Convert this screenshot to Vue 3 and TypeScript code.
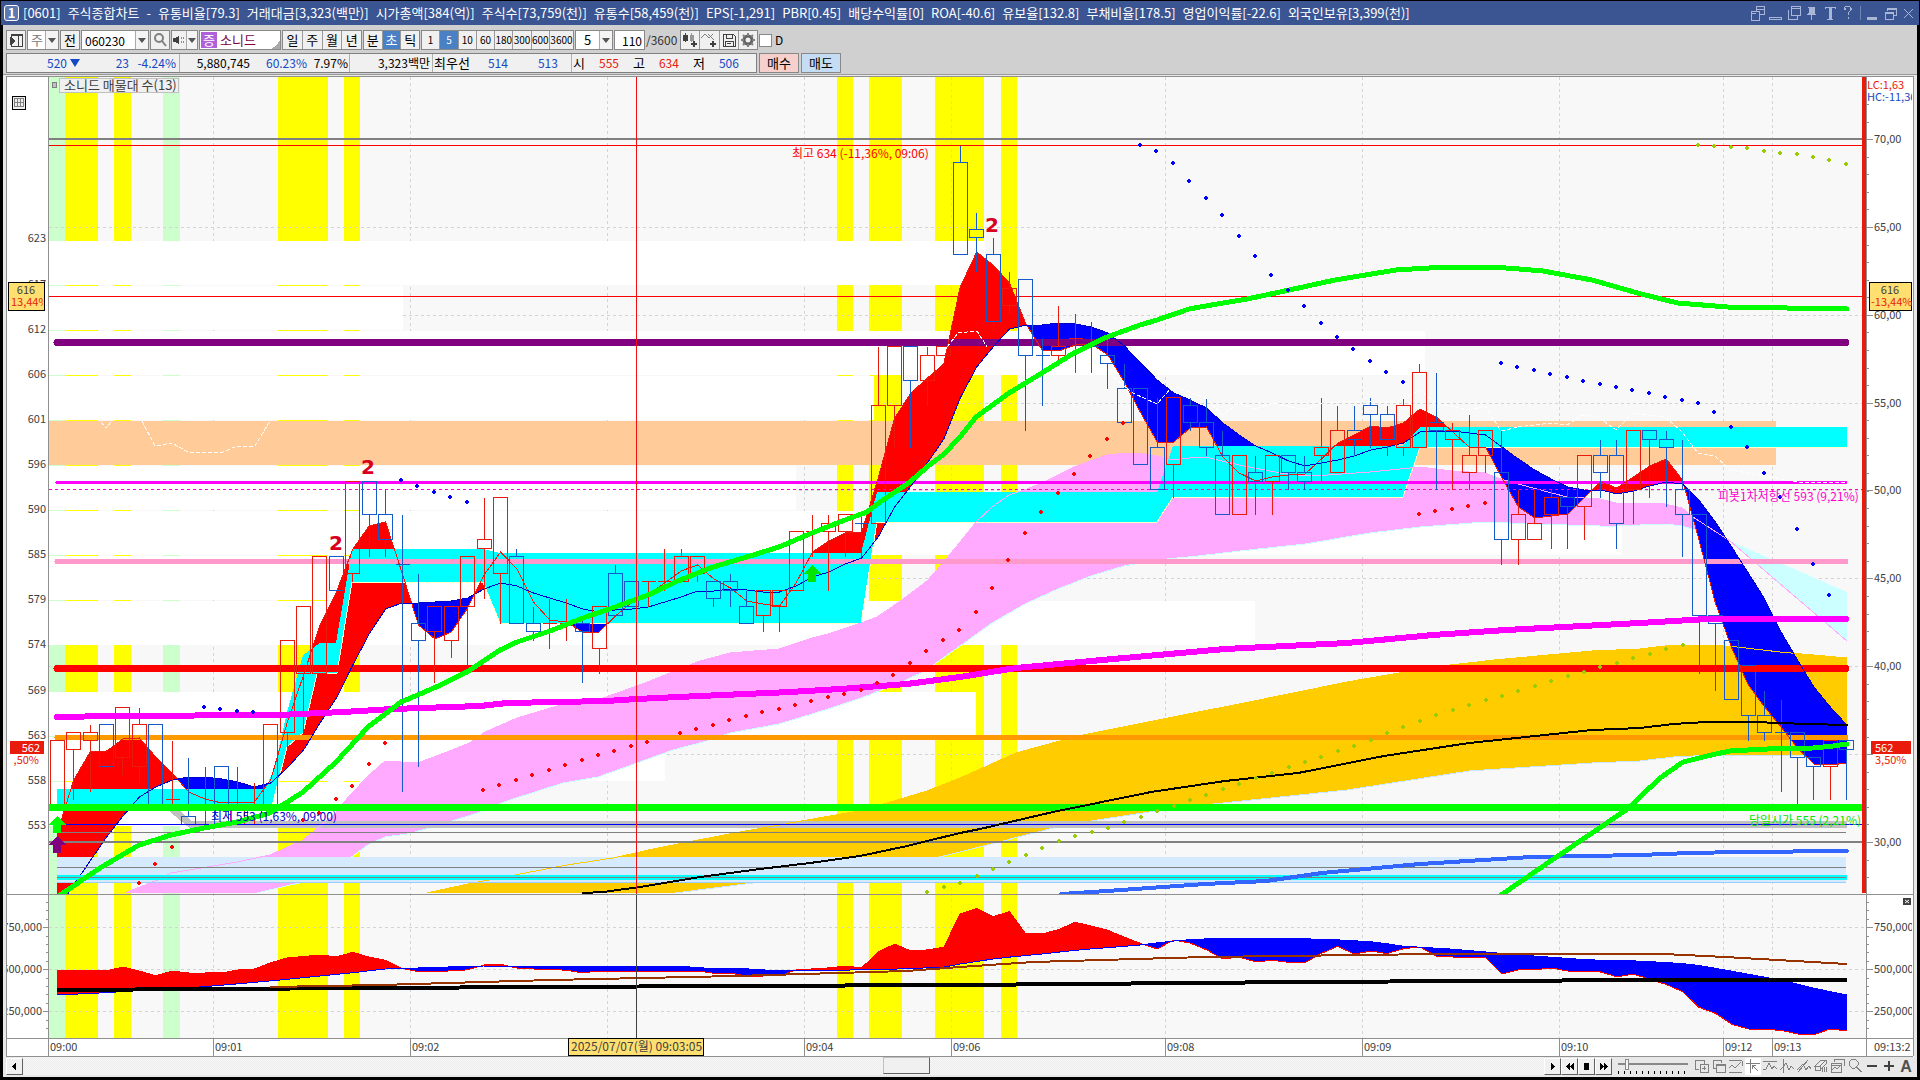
<script setup lang="ts">
type Point = [number, number]

const X0 = 57.3
const STEP = 16.417
const COUNT = 110
const xAt = (i: number): number => X0 + STEP * i
const yAt = (price: number): number => 824.3 - 8.383 * (price - 553)

// [colour, body top, body bottom, high, low]
const raw: [string, number, number, number, number][] = [
  ['r', 563, 555, 563, 555], ['r', 564, 562, 564, 556], ['r', 564, 563, 565, 557], ['b', 565, 560, 565, 560],
  ['r', 567, 561, 567, 559], ['r', 565, 560, 567, 558], ['b', 565, 555, 565, 555], ['r', 556, 556, 563, 555],
  ['b', 554, 553, 561, 553], ['b', 555, 555, 560, 553], ['b', 560, 553, 560, 553], ['r', 555, 553, 560, 553],
  ['r', 555, 554, 558, 553], ['r', 565, 555, 565, 555], ['r', 575, 564, 575, 562], ['r', 579, 571, 579, 564],
  ['r', 585, 571, 585, 571], ['b', 585, 581, 585, 581], ['r', 594, 583, 594, 582], ['b', 594, 590, 594, 585],
  ['b', 590, 587, 593, 585], ['b', 584, 584, 590, 557], ['b', 577, 575, 583, 560], ['r', 579, 576, 579, 570],
  ['r', 579, 575, 579, 573], ['r', 585, 579, 585, 572], ['r', 587, 586, 592, 580], ['r', 592, 583, 592, 577],
  ['b', 585, 577, 586, 577], ['b', 577, 576, 579, 575], ['r', 577, 577, 580, 574], ['r', 577, 577, 580, 575],
  ['b', 577, 576, 578, 570], ['r', 579, 574, 579, 571], ['b', 583, 578, 584, 578], ['b', 582, 579, 582, 579],
  ['r', 582, 582, 582, 579], ['r', 582, 582, 586, 581], ['r', 585, 582, 586, 582], ['r', 585, 583, 585, 582],
  ['b', 582, 580, 582, 579], ['b', 582, 581, 583, 579], ['b', 579, 577, 581, 577], ['r', 581, 578, 581, 576],
  ['r', 581, 579, 581, 576], ['r', 588, 581, 588, 581], ['r', 588, 588, 590, 585], ['r', 589, 588, 590, 581],
  ['r', 590, 588, 590, 585], ['b', 589, 589, 590, 585], ['r', 603, 589, 610, 589], ['r', 610, 603, 610, 598],
  ['b', 610, 606, 610, 598], ['r', 609, 606, 610, 603], ['r', 610, 609, 610, 609], ['b', 632, 621, 634, 621],
  ['b', 624, 623, 626, 619], ['b', 621, 613, 623, 612], ['r', 617, 615, 619, 614], ['b', 618, 609, 618, 600],
  ['b', 609, 609, 611, 603], ['r', 610, 609, 615, 608], ['r', 611, 611, 614, 607], ['b', 610, 610, 613, 607],
  ['b', 609, 608, 611, 605], ['b', 605, 601, 608, 601], ['b', 605, 596, 605, 596], ['b', 598, 593, 604, 593],
  ['r', 604, 596, 604, 592], ['b', 603, 601, 604, 600], ['b', 601, 598, 604, 597], ['b', 597, 590, 600, 590],
  ['r', 597, 590, 597, 590], ['b', 595, 594, 597, 590], ['r', 597, 594, 597, 590], ['b', 597, 595, 597, 593],
  ['b', 595, 594, 597, 593], ['r', 598, 597, 604, 594], ['r', 600, 595, 603, 595], ['b', 600, 599, 603, 597],
  ['b', 603, 602, 604, 598], ['b', 602, 599, 603, 597], ['r', 603, 598, 604, 597], ['r', 607, 598, 608, 598],
  ['b', 601, 600, 607, 593], ['r', 600, 599, 601, 593], ['r', 597, 595, 602, 593], ['r', 600, 597, 600, 595],
  ['b', 595, 587, 600, 584], ['r', 590, 587, 593, 584], ['r', 589, 587, 593, 587], ['r', 592, 590, 593, 586],
  ['b', 592, 591, 593, 586], ['r', 597, 591, 597, 587], ['b', 597, 595, 599, 592], ['b', 597, 589, 599, 586],
  ['r', 600, 593, 600, 589], ['b', 600, 599, 600, 592], ['b', 599, 598, 600, 591], ['b', 593, 590, 599, 585],
  ['b', 590, 578, 590, 571], ['b', 578, 577, 578, 569], ['b', 575, 568, 575, 568], ['b', 572, 566, 572, 563],
  ['b', 566, 564, 569, 563], ['b', 564, 564, 568, 557], ['b', 564, 561, 564, 555], ['b', 561, 560, 561, 556],
  ['r', 563, 560, 563, 556], ['b', 563, 562, 563, 556],
]
const candles = raw.map(([c, top, bottom, high, low], i) => {
  const x = Math.floor(xAt(i))
  const t = Math.round(yAt(top))
  const b = Math.round(yAt(bottom))
  const wick = `M${x} ${Math.round(yAt(high))}V${t}M${x} ${b}V${Math.round(yAt(low))}`
  const body = t === b ? `M${x - 7} ${t}H${x + 7}` : `M${x - 7} ${t}H${x + 7}V${b}H${x - 7}Z`
  return { d: wick + body, color: c === 'r' ? '#e81b0c' : '#145ac8' }
})

const fast = [
  833, 780, 752, 751, 739, 738, 757, 773, 792, 799, 803, 802, 802, 780, 723, 675, 625, 592, 549, 526, 522, 573,
  625, 639, 632, 608, 575, 552, 569, 602, 620, 622, 632, 632, 616, 602, 594, 583, 571, 565, 579, 588, 601, 604,
  606, 583, 552, 541, 533, 532, 478, 418, 393, 378, 364, 287, 252, 265, 283, 324, 350, 351, 345, 344, 355, 382,
  413, 442, 442, 428, 427, 457, 473, 481, 477, 475, 474, 459, 443, 435, 426, 428, 423, 409, 417, 432, 447, 447,
  478, 507, 518, 516, 514, 498, 482, 488, 477, 466, 459, 480, 540, 603, 648, 685, 707, 727, 748, 764, 765, 763,
]
const slow = [
  910, 885, 861, 837, 816, 797, 787, 780, 777, 777, 779, 782, 787, 783, 768, 750, 723, 698, 665, 634, 609, 603,
  603, 602, 601, 598, 589, 583, 586, 593, 598, 603, 609, 612, 610, 609, 607, 602, 597, 591, 591, 589, 590, 592,
  592, 586, 577, 572, 564, 558, 537, 507, 486, 463, 439, 398, 367, 347, 329, 325, 325, 323, 324, 327, 333, 346,
  363, 380, 393, 400, 408, 423, 435, 446, 453, 461, 466, 463, 460, 456, 450, 447, 443, 432, 431, 431, 433, 435,
  447, 459, 470, 479, 487, 490, 490, 494, 491, 486, 482, 484, 500, 522, 547, 573, 599, 632, 660, 687, 707, 725,
]

function line(points: Point[]): string {
  return 'M' + points.map(([x, y]) => `${x.toFixed(1)} ${y.toFixed(1)}`).join('L')
}
function area(top: Point[], bottom: Point[]): string {
  return line([...top, ...[...bottom].reverse()]) + 'Z'
}
function sample(points: Point[]): number[] {
  return Array.from({ length: COUNT }, (_, i) => {
    const x = xAt(i)
    const k = points.findIndex((p) => p[0] >= x)
    if (k === -1) return points[points.length - 1][1]
    if (k === 0) return points[0][1]
    const [xa, ya] = points[k - 1]
    const [xb, yb] = points[k]
    return ya + ((yb - ya) * (x - xa)) / (xb - xa)
  })
}
// Splits the space between two series into the part where a is above b and the rest.
function spread(a: number[], b: number[]): { up: string; down: string } {
  let up = ''
  let down = ''
  const add = (p: Point[], above: boolean) => {
    if (above) up += line(p) + 'Z'
    else down += line(p) + 'Z'
  }
  for (let i = 0; i < a.length - 1; i++) {
    const d0 = b[i] - a[i]
    const d1 = b[i + 1] - a[i + 1]
    const x = xAt(i)
    const n = xAt(i + 1)
    if (d0 * d1 < 0) {
      const t = d0 / (d0 - d1)
      const cross: Point = [x + STEP * t, a[i] + (a[i + 1] - a[i]) * t]
      add([[x, a[i]], cross, [x, b[i]]], d0 > 0)
      add([[n, a[i + 1]], cross, [n, b[i + 1]]], d1 > 0)
    } else {
      add([[x, a[i]], [n, a[i + 1]], [n, b[i + 1]], [x, b[i]]], d0 + d1 > 0)
    }
  }
  return { up, down }
}
const series = (v: number[]): string => line(v.map((y, i) => [xAt(i), y]))
const trend = spread(fast, slow)

const flow: Point[] = [
  [57, 971], [64, 970], [98, 970], [106, 971], [123, 967], [139, 971], [155, 976], [172, 971], [188, 973], [221, 973],
  [237, 970], [256, 969], [270, 963], [286, 958], [320, 955], [336, 957], [352, 952], [368, 957], [385, 960], [400, 968],
  [420, 972], [450, 971], [467, 970], [484, 965], [500, 964], [516, 968], [533, 969], [565, 970], [582, 973], [598, 971],
  [640, 971], [697, 971], [720, 974], [730, 973], [746, 976], [779, 976], [795, 970], [828, 968], [845, 966], [863, 968],
  [878, 952], [895, 944], [910, 951], [943, 949], [960, 914], [976, 908], [992, 917], [1009, 911], [1025, 934],
  [1042, 934], [1058, 930], [1074, 922], [1091, 926], [1107, 930], [1124, 937], [1142, 944], [1157, 949], [1173, 940],
  [1190, 943], [1205, 949], [1223, 959], [1239, 957], [1255, 962], [1270, 960], [1303, 964], [1320, 954], [1337, 946],
  [1354, 954], [1370, 951], [1386, 954], [1400, 949], [1420, 947], [1436, 956], [1468, 958], [1485, 957], [1502, 974],
  [1517, 970], [1534, 970], [1551, 968], [1567, 971], [1602, 972], [1616, 977], [1633, 974], [1649, 979], [1665, 984],
  [1682, 991], [1698, 1007], [1715, 1013], [1731, 1024], [1747, 1029], [1780, 1030], [1797, 1034], [1813, 1035],
  [1830, 1029], [1847, 1031],
]
const flowAverage: Point[] = [
  [57, 995], [100, 993], [200, 987], [270, 981], [300, 978], [350, 973], [385, 969], [417, 968], [480, 966], [680, 966],
  [700, 968], [750, 969], [780, 971], [850, 970], [900, 969], [945, 967], [960, 964], [1000, 958], [1042, 954],
  [1078, 950], [1140, 945], [1173, 941], [1200, 939], [1250, 938], [1280, 938], [1340, 940], [1376, 942], [1400, 946],
  [1450, 949], [1485, 952], [1534, 956], [1590, 960], [1640, 961], [1690, 964], [1731, 971], [1780, 980], [1813, 988],
  [1847, 995],
]
const flowValues = sample(flow)
const flowMeans = sample(flowAverage)
const flowSpread = spread(flowValues, flowMeans)

const pinkTop: Point[] = [
  [125, 893], [160, 879], [171, 873], [237, 862], [270, 855], [303, 840], [336, 813], [343, 803], [368, 776], [385, 761],
  [417, 763], [434, 757], [467, 744], [480, 737], [483, 733], [517, 718], [557, 706], [600, 699], [637, 686], [660, 677],
  [680, 669], [700, 661], [730, 653], [779, 649], [812, 638], [828, 634], [861, 623], [877, 617], [902, 600], [927, 581],
  [943, 563], [960, 542], [976, 522], [992, 507], [1009, 495], [1027, 489], [1042, 483], [1074, 467], [1107, 455],
  [1127, 453], [1140, 453], [1157, 456], [1173, 460], [1189, 458], [1206, 457], [1222, 461], [1239, 465], [1280, 473],
  [1305, 476], [1327, 475], [1370, 472], [1420, 467], [1452, 471], [1485, 473], [1501, 479], [1518, 484], [1567, 497],
  [1600, 499], [1616, 503], [1665, 504], [1682, 508], [1693, 517], [1730, 541],
]
const pinkBottom: Point[] = [
  [257, 893], [303, 882], [336, 868], [368, 845], [385, 837], [407, 834], [434, 827], [480, 812], [507, 801], [563, 783],
  [598, 777], [637, 763], [673, 750], [707, 741], [730, 733], [779, 724], [812, 714], [828, 709], [861, 698], [887, 688],
  [902, 682], [927, 670], [943, 658], [960, 646], [992, 623], [1025, 604], [1058, 589], [1091, 576], [1124, 566],
  [1157, 560], [1198, 556], [1240, 551], [1305, 544], [1370, 533], [1420, 527], [1485, 522], [1534, 524], [1600, 526],
  [1616, 526], [1665, 524], [1682, 526], [1695, 530], [1717, 537], [1730, 541],
]
const goldTop: Point[] = [
  [427, 893], [440, 890], [473, 883], [520, 874], [567, 865], [613, 858], [653, 849], [693, 841], [740, 832], [807, 820],
  [853, 812], [887, 803], [927, 791], [960, 778], [1016, 753], [1078, 736], [1163, 719], [1249, 702], [1347, 682],
  [1433, 667], [1494, 660], [1592, 651], [1640, 649], [1673, 645], [1713, 645], [1737, 647], [1780, 652], [1847, 658],
]
const goldBottom: Point[] = [
  [675, 893], [753, 883], [807, 876], [873, 868], [927, 860], [960, 852], [1065, 825], [1175, 808], [1347, 790],
  [1469, 771], [1592, 763], [1640, 761], [1673, 757], [1713, 755], [1847, 756],
]
const cyanTop: Point[] = [
  [57, 789], [265, 789], [274, 770], [287, 712], [303, 655], [320, 643], [336, 643], [352, 549], [483, 549], [500, 553],
  [861, 553], [877, 492], [1157, 492], [1173, 446], [1403, 446], [1420, 427], [1847, 427],
]
const cyanBottom: Point[] = [
  [57, 806], [272, 806], [287, 747], [303, 733], [317, 674], [337, 673], [352, 582], [483, 582], [500, 623], [861, 623],
  [877, 522], [1157, 522], [1173, 497], [1403, 497], [1420, 447], [1847, 447],
]
const averages: { points: Point[]; color: string; width: number }[] = [
  {
    color: '#ff00ff', width: 6, points: [
      [57, 717], [113, 716], [278, 715], [343, 712], [393, 709], [480, 706], [507, 703], [607, 701], [637, 699],
      [700, 696], [790, 692], [840, 689], [907, 684], [960, 677], [1016, 668], [1102, 660], [1225, 649], [1347, 643],
      [1433, 635], [1506, 630], [1640, 623], [1707, 619], [1846, 619],
    ],
  },
  {
    color: '#000', width: 2, points: [
      [583, 893], [603, 892], [640, 887], [700, 877], [760, 869], [810, 863], [860, 856], [907, 846], [927, 841],
      [960, 833], [980, 829], [1053, 812], [1151, 792], [1225, 781], [1298, 773], [1384, 756], [1469, 743], [1592, 730],
      [1640, 728], [1673, 724], [1707, 722], [1753, 722], [1807, 724], [1847, 725],
    ],
  },
  {
    color: '#3366ff', width: 4, points: [
      [1061, 894], [1107, 891], [1205, 884], [1266, 881], [1322, 873], [1420, 864], [1531, 857], [1640, 855],
      [1690, 853], [1740, 852], [1847, 851],
    ],
  },
  {
    color: '#00ff00', width: 5, points: [
      [60, 895], [100, 868], [139, 845], [171, 835], [204, 828], [237, 822], [270, 813], [303, 792], [336, 762],
      [368, 727], [401, 702], [434, 688], [467, 672], [500, 650], [517, 642], [550, 631], [583, 618], [615, 607],
      [648, 595], [680, 580], [713, 567], [750, 556], [779, 547], [812, 533], [845, 520], [867, 512], [883, 500],
      [910, 482], [927, 467], [943, 455], [960, 437], [976, 417], [1009, 393], [1042, 373], [1074, 353], [1107, 337],
      [1140, 325], [1157, 320], [1189, 309], [1223, 303], [1247, 299], [1280, 292], [1335, 280], [1396, 270],
      [1445, 267], [1494, 267], [1543, 271], [1592, 280], [1641, 294], [1678, 303], [1727, 307], [1847, 309],
    ],
  },
  {
    color: '#00ff00', width: 5, points: [
      [1501, 895], [1523, 880], [1555, 858], [1629, 808], [1640, 797], [1660, 778], [1683, 762], [1707, 756],
      [1730, 751], [1767, 749], [1813, 748], [1833, 746], [1847, 744],
    ],
  },
]
const shadows: Point[][] = [
  [[101, 422], [106, 428], [111, 422]],
  [[142, 421], [155, 446], [172, 443], [188, 452], [223, 452], [237, 446], [255, 446], [270, 421]],
  [[947, 347], [958, 333], [977, 331], [987, 347]],
  [[1113, 377], [1133, 393], [1157, 404], [1173, 386], [1206, 398], [1222, 415], [1239, 403], [1255, 409], [1272, 403],
    [1305, 410], [1322, 403], [1370, 401], [1387, 403], [1403, 399], [1420, 390], [1436, 403], [1468, 410],
    [1485, 406], [1501, 431], [1518, 427], [1552, 423], [1567, 425], [1583, 415], [1600, 418], [1616, 430],
    [1633, 413], [1665, 417], [1682, 432], [1698, 453], [1715, 456], [1730, 470], [1782, 479], [1804, 483], [1847, 482]],
]

const levels = [
  { y: 342, x: 57, color: '#800080', width: 7 },
  { y: 482, x: 57, color: '#ff00ff', width: 3 },
  { y: 561, x: 57, color: '#ff99cc', width: 5 },
  { y: 668, x: 57, color: '#ff0000', width: 7 },
  { y: 737, x: 57, color: '#ff9900', width: 5 },
]

const every = (start: number, ys: number[]): Point[] => ys.map((y, k) => [Math.round(start + STEP * k), y])
const blueDots: Point[] = [
  ...every(204, [707, 709, 711, 712]),
  ...every(401, [480, 486, 492, 497, 502]),
  ...every(1140, [145, 151, 163, 181, 198, 215, 236, 256, 275, 290, 306, 323, 337, 349, 361, 372, 382]),
  ...every(1501, [363, 367, 370, 374, 377, 381, 384, 387, 390, 393, 397, 400, 403, 412, 427, 447, 473, 497, 529, 564, 595]),
]
const redDots: Point[] = [
  ...every(139, [883, 864, 847]),
  ...every(303, [820, 813, 799, 786, 764, 743]),
  ...every(483, [790, 785, 780, 775, 770, 765, 760, 755, 751, 746, 742]),
  ...every(680, [733, 729, 725, 720, 716, 712, 709, 705, 701, 697, 694, 690, 683, 675, 663, 651, 640, 630, 612, 588, 560, 533, 512, 493, 474, 456, 439, 423]),
  ...every(1419, [514, 511, 509, 506, 503]),
]
const oliveCurve: Point[] = [
  [927, 892], [960, 883], [1058, 841], [1107, 828], [1173, 806], [1256, 778], [1354, 746], [1436, 715], [1518, 691],
  [1583, 672], [1649, 654], [1682, 645],
]
const oliveDots: Point[] = [
  ...sample(oliveCurve).map((y, i): Point => [Math.round(xAt(i)), Math.round(y)]).filter(([x]) => x > 920 && x < 1690),
  ...every(1698, [145, 146, 147, 148, 151, 153, 154, 157, 160, 164]),
]
const dots = [
  { color: '#0000ff', points: blueDots },
  { color: '#ff0000', points: redDots },
  { color: '#99cc00', points: oliveDots },
]

const bands = [
  [49, 16, '#ccffcc'], [65, 33, '#ffff00'], [114, 17, '#ffff00'], [163, 17, '#ccffcc'], [278, 50, '#ffff00'],
  [344, 16, '#ffff00'], [837, 16, '#ffff00'], [869, 33, '#ffff00'], [935, 49, '#ffff00'], [1001, 16, '#ffff00'],
] as [number, number, string][]
const profile: Point[] = [
  [241, 985], [286, 403], [331, 1425], [376, 874], [466, 796], [511, 1622], [556, 868], [601, 1255], [692, 976],
  [737, 665], [782, 440],
]
const times = [
  { x: 48, t: '09:00' }, { x: 213, t: '09:01' }, { x: 410, t: '09:02' }, { x: 607, t: '' }, { x: 804, t: '09:04' },
  { x: 951, t: '09:06' }, { x: 1165, t: '09:08' }, { x: 1362, t: '09:09' }, { x: 1559, t: '09:10' },
  { x: 1723, t: '09:12' }, { x: 1772, t: '09:13' },
]
const percents = [
  { y: 139, t: '70,00' }, { y: 227, t: '65,00' }, { y: 315, t: '60,00' }, { y: 403, t: '55,00' }, { y: 490, t: '50,00' },
  { y: 578, t: '45,00' }, { y: 666, t: '40,00' }, { y: 754, t: '' }, { y: 842, t: '30,00' },
]
const minorTicks = Array.from({ length: 45 }, (_, k) => Math.round(104 + k * 17.57)).filter((y) => y < 890)
const lowerTicks = Array.from({ length: 17 }, (_, k) => Math.round(902 + k * 8.4)).filter((y) => y < 1036)
const prices = [
  [237, 623], [283, 617], [328, 612], [373, 606], [418, 601], [463, 596], [508, 590], [553, 585], [598, 579],
  [643, 574], [689, 569], [734, 563], [779, 558], [824, 553],
]
const volumes = [{ y: 927, t: '750,000' }, { y: 969, t: '500,000' }, { y: 1011, t: '250,000' }]
const marks: Point[] = [[368, 474], [336, 550], [992, 232]]
const arrows = [
  { x: 57, y: 816, color: '#00ff00' }, { x: 57, y: 836, color: '#800080' }, { x: 812, y: 565, color: '#00e600' },
]

const periods = [['일', '주', '월', '년'], ['분', '초', '틱'], ['1', '5', '10', '60', '180', '300', '600', '3600']]
const activePeriods = ['초', '5']
const title = [
  '[0601]', '주식종합차트', '-', '유통비율[79.3]', '거래대금[3,323(백만)]', '시가총액[384(억)]', '주식수[73,759(천)]',
  '유통수[58,459(천)]', 'EPS[-1,291]', 'PBR[0.45]', '배당수익률[0]', 'ROA[-40.6]', '유보율[132.8]', '부채비율[178.5]',
  '영업이익률[-22.6]', '외국인보유[3,399(천)]',
]

const windowIcons = [
  { name: '창 분리', d: 'M1 6H9V15H1ZM6 6V1H14V9H9M6 4H14M1 8H6' },
  { name: '숨기기', d: 'M1 12H13V14H1Z' },
  { name: '복사', d: 'M5 1H14V10H5ZM2 5V14H11V11M5 3H14' },
  { name: '고정', d: 'M4 2H11M5 3V8M6 3V8M7 3V15M8 3V8M9 3V8M10 3V8M3 9H12M4 8H11' },
  { name: '글꼴', d: 'M3 2H13V4M3 2V4M7 2V14M8 2V14M9 2V14M5 14H11' },
  { name: '도움말', d: 'M4 5V3L6 1H9L11 3V5L8 8V10M8 12V14M5 5V3M10 3V5' },
]
const frameIcons = [
  { name: '최소화', d: 'M2 12H12M2 13H12M2 14H12' },
  { name: '이전 크기', d: 'M2 7H10V14H2ZM4 6V3H13V10H11M2 8H10M4 4H13' },
  { name: '닫기', d: 'M3 4L12 13M12 4L3 13' },
]
const playIcons = [
  { name: '재생', d: 'M6 3L11 8L6 13Z' },
  { name: '뒤로', d: 'M8 4V12L4 8ZM13 4V12L9 8Z' },
  { name: '정지', d: 'M5 4H11V12H5Z' },
  { name: '앞으로', d: 'M4 4V12L8 8ZM9 4V12L13 8Z' },
]
const toolIcons = [
  { name: '창 추가', d: 'M1 2H10V6M1 2V11H5M6 6H14V14H6ZM10 8V12M8 10H12' },
  { name: '겹치기', d: 'M2 2H10V5M2 2V10H5M5 6H14V14H5ZM5 7H14' },
  { name: '영역', d: 'M1 2H14M1 14H14M1 10L4 7L7 10L13 4M14 3V8' },
  { name: '십자선', d: 'M1 5H15M5 1V15M7 7L13 13M7 7V11M7 7H11' },
  { name: '수평 추세', d: 'M1 3H15M1 12L4 11L7 5L10 11L12 8L15 11' },
  { name: '수직 추세', d: 'M4 1V15M1 12L4 9L7 5L10 12L12 8L15 11' },
  { name: '사선 추세', d: 'M2 14L12 2M1 12L4 9L7 6L10 12L13 8L15 11' },
  { name: '모두 지우기', d: 'M2 8L8 2H13L7 8ZM2 8V12H7V8M7 12L13 6V2M9 10V14M11 9V14M13 9V14' },
  { name: '차트 복사', d: 'M4 1H14V8M4 1V4M1 5H11V14H1ZM1 7H11M2 12L5 9L7 11L10 8' },
  { name: '확대 보기', d: 'M5 1H8L11 4V7L8 10H5L2 7V4ZM9 9L14 14M10 9L15 14' },
]
</script>

<template>
  <div class="window">
    <header class="title-bar">
      <span class="badge">1</span>
      <h1><span v-for="t in title" :key="t">{{ t }}</span></h1>
      <div class="caption">
        <button v-for="i in windowIcons" :key="i.name" :aria-label="i.name"><svg viewBox="0 0 16 16"><path :d="i.d" /></svg></button>
        <i class="bar"></i>
        <button v-for="i in frameIcons" :key="i.name" :aria-label="i.name"><svg viewBox="0 0 16 16"><path :d="i.d" /></svg></button>
      </div>
    </header>

    <div class="toolbar">
      <button class="tool" aria-label="목록 열기">
        <svg viewBox="0 0 16 16" class="dark"><path d="M3 2H14V14H3ZM3 3H14M10 3V14" /><path d="M2 5L7 9L2 13Z" class="solid" /></svg>
      </button>
      <label class="drop w32"><select aria-label="구분" class="dim"><option>주</option></select><i class="caret"></i></label>
      <button class="tool">전</button>
      <label class="drop w68"><input value="060230" aria-label="종목코드" /><i class="caret"></i></label>
      <button class="tool" aria-label="검색"><svg viewBox="0 0 16 16"><circle cx="7" cy="6" r="4" class="thick" /><path d="M10 9L14 14" class="thick" /></svg></button>
      <button class="tool sound" aria-label="음성">
        <svg viewBox="0 0 16 16"><path d="M1 6H4L8 3V13L4 10H1Z" class="solid" /><path d="M11 5V7M11 9V11M13 5V7M13 9V11" /></svg>
        <i class="caret"></i>
      </button>
      <label class="stock"><b>증</b><input value="소니드" aria-label="종목명" /></label>
      <div v-for="(g, k) in periods" :key="k" class="group" :class="'g' + k">
        <button v-for="p in g" :key="p" :class="{ on: activePeriods.includes(p), long: p.length > 3 }">{{ p }}</button>
      </div>
      <label class="drop w38"><select aria-label="간격"><option>5</option></select><i class="caret"></i></label>
      <label class="count"><input value="110" aria-label="봉 개수" /><span>/3600</span></label>
      <div class="group icons">
        <button aria-label="봉 추가"><svg viewBox="0 0 16 16" class="dark"><path d="M1 3H5V8H1ZM3 1V10" class="solid" /><path d="M8 3H11V8H8ZM9 1V10" opacity=".5" class="solid" /><path d="M9 12H15M12 9V15M9 11H15M11 9V15" /></svg></button>
        <button aria-label="지표 추가"><svg viewBox="0 0 16 16"><path d="M0 6L4 2L8 6L12 2M7 2L13 8" /><path d="M9 12H15M12 9V15M9 11H15M11 9V15" class="ink" /></svg></button>
        <button aria-label="저장"><svg viewBox="0 0 16 16" class="dark"><path d="M2 2H12L14 4V14H2ZM5 2V6H11V2M4 14V9H12V14M6 11H10" /></svg></button>
        <button aria-label="설정"><svg viewBox="0 0 16 16"><circle cx="8" cy="8" r="4" class="gear" /><path d="M8 1V4M8 12V15M1 8H4M12 8H15M3 3L5 5M11 11L13 13M13 3L11 5M5 11L3 13" class="thick" /></svg></button>
      </div>
      <label class="check"><input type="checkbox" />D</label>
    </div>

    <div class="quote">
      <div class="cells">
        <span class="cell c1 blue"><b>520</b><i class="down"></i><b class="diff">23</b><b class="rate">-4.24%</b></span>
        <span class="cell c2"><b class="vol">5,880,745</b><b class="p1 blue">60.23%</b><b class="p2">7.97%</b></span>
        <span class="cell c3"><b>3,323백만</b></span>
        <span class="cell c4">최우선<b class="blue">514</b><b class="blue">513</b></span>
        <span class="cell c5">시<b class="red">555</b>고<b class="red">634</b>저<b class="blue">506</b></span>
      </div>
      <button class="buy">매수</button>
      <button class="sell">매도</button>
    </div>

    <main class="panel">
      <svg class="chart" viewBox="6 76 1908 981" role="img" aria-label="소니드 매물대">
        <defs>
          <clipPath id="plot"><rect x="49" y="77" width="1814" height="817" /></clipPath>
          <clipPath id="axes"><rect x="7" y="77" width="1905" height="979" /></clipPath>
          <clipPath id="tagLeft"><rect x="9" y="283" width="34" height="470" /></clipPath>
          <clipPath id="tagRight"><rect x="1868" y="283" width="44" height="28" /></clipPath>
        </defs>
        <rect x="6" y="76" width="1908" height="981" fill="#fff" />
        <rect x="49" y="77" width="1817" height="961" fill="#f8f8f8" />

        <g class="crisp">
          <g v-for="b in bands" :key="b[0]" :fill="b[2]">
            <rect :x="b[0]" y="77" :width="b[1]" height="961" />
          </g>
          <path v-for="t in times.slice(1)" :key="t.x" :d="`M${t.x + 0.5} 77V1038`" class="grid" />
          <path v-for="p in percents" :key="p.y" :d="`M49 ${p.y + 0.5}H1862`" class="grid" />
          <path v-for="v in volumes" :key="v.y" :d="`M49 ${v.y + 0.5}H1866`" class="grid" />
          <rect v-for="p in profile" :key="'w' + p[0]" x="49" :y="p[0]" :width="p[1] - 49" height="44" fill="#fff" />
          <rect x="49" y="421" width="1727" height="44" fill="#ffcc99" />
        </g>

        <g class="crisp" clip-path="url(#plot)">
          <path :d="area(goldTop, goldBottom)" fill="#ffcc00" />
          <path :d="line(goldBottom)" class="thin" stroke="#cce6ff" />
          <path :d="area(pinkTop, pinkBottom)" fill="#ffaaff" />
          <path :d="line(pinkBottom)" class="thin" stroke="#ccffff" />
          <path d="M1730 541L1847 592V641Z" fill="#ccffff" />
          <path d="M1730 541L1847 641" class="thin" stroke="#ffaaff" />
          <path :d="trend.up" fill="#ff0000" />
          <path :d="trend.down" fill="#0000ff" />
          <path :d="area(cyanTop, cyanBottom)" fill="#00ffff" />
          <path :d="line(cyanBottom)" class="thin" stroke="#ffffcc" />
          <path d="M171 808L190 824H1847" fill="none" stroke="#c0c0c0" stroke-width="7" />
          <rect x="57" y="857" width="1789" height="26" fill="#d6eaff" />
          <path :d="line(pinkTop)" class="thin" stroke="#ffaaff" />
          <path :d="line(goldTop)" class="thin" stroke="#ffcc00" />
          <g v-for="l in levels" :key="l.y">
            <path :d="`M${l.x} ${l.y + 0.5}H1846`" fill="none" stroke-linecap="round" :stroke="l.color" :stroke-width="l.width" />
          </g>
          <path d="M49 139H1862" stroke="#808080" stroke-width="2" />
          <path d="M49 145.5H1862M49 296.5H1862" stroke="#ff0000" />
          <path d="M49 489.5H1862" stroke="#ff00cc" stroke-dasharray="3 3" />
          <path :d="series(fast)" class="thin" stroke="#e81b0c" />
          <path :d="series(slow)" class="thin" stroke="#0000cc" />
          <g transform="translate(0.5 0.5)"><path v-for="(c, i) in candles" :key="i" :d="c.d" fill="none" :stroke="c.color" /></g>
          <path v-for="(s, i) in shadows" :key="i" :d="line(s)" class="thin" stroke="#fff" stroke-dasharray="4 2" />
          <path d="M49 807.5H1862" stroke="#00ff00" stroke-width="7" />
          <path d="M49 824.5H1862" stroke="#0000ff" />
          <path d="M57 832.5H1846M57 867.5H1846" stroke="#808080" />
          <path d="M49 842H1862" stroke="#808080" stroke-width="2" />
          <path d="M57 877.5H1847" stroke="#00ffff" stroke-width="5" />
          <path d="M57 877.5H1846" stroke="#808080" />
          <path d="M57 882.5H1846" stroke="#99ccff" />
          <path v-for="(a, i) in averages" :key="i" :d="line(a.points)" fill="none" stroke-linecap="round" stroke-linejoin="round" :stroke="a.color" :stroke-width="a.width" />
          <g v-for="d in dots" :key="d.color" :fill="d.color">
            <path v-for="p in d.points" :key="p[0]" :d="`M${p[0] - 1} ${p[1] - 2}h2v1h1v2h-1v1h-2v-1h-1v-2h1z`" />
          </g>
          <path v-for="a in arrows" :key="a.x + a.y" :d="`M${a.x} ${a.y}l9 9h-5v8h-8v-8h-5z`" :fill="a.color" />
        </g>

        <g class="crisp">
          <path :d="flowSpread.up" fill="#ff0000" />
          <path :d="flowSpread.down" fill="#0000ff" />
          <path :d="series(flowValues)" class="thin" stroke="#ff0000" />
          <path :d="series(flowMeans)" class="thin" stroke="#0000ff" />
          <path d="M57 990L370 988L730 986L960 985L1304 982L1650 980H1847" fill="none" stroke="#000" stroke-width="4" />
          <path d="M270 987L380 985L551 980L735 976L906 971L960 967L1033 962L1205 957L1438 954H1664L1725 957L1847 964" fill="none" stroke="#993300" stroke-width="2" />
          <path d="M636.5 77V894" stroke="#f01010" />
          <path d="M636.5 895V1038" stroke="#404040" />
          <rect x="1862" y="77" width="4" height="816" fill="#e81b0c" />
        </g>

        <text v-for="m in marks" :key="m[0]" :x="m[0]" :y="m[1]" class="mark">2</text>
        <text x="792" y="158" fill="#ff0000">최고 634 (-11,36%, 09:06)</text>
        <text x="211" y="821" fill="#0000cc">최저 553 (1,63%, 09:00)</text>
        <g clip-path="url(#plot)">
          <text x="1718" y="501" fill="#ff00cc">피봇1차저항선 593 (9,21%)</text>
          <text x="1749" y="825" fill="#00e600">당일시가 555 (2,21%)</text>
        </g>

        <g class="crisp">
          <rect x="59" y="78" width="119" height="14" fill="#f0f0f0" stroke="#c0c0c0" />
          <rect x="52" y="82" width="4" height="5" fill="#c0c0c0" stroke="#808080" />
          <rect x="12" y="96" width="13" height="13" fill="#eee" stroke="#000" />
          <path d="M14 98.5H24M14 102.5H24M14 106.5H24M14.5 98V107M17.5 98V107M20.5 98V107M23.5 98V107" stroke="#808080" />
          <path d="M48.5 77V1056M1866.5 77V1056M6 894.5H1913M6 1038.5H1913M6 1056.5H1913M6.5 76V1056M6 76.5H1913M1913.5 76V1056" stroke="#909090" />
          <path v-for="t in times" :key="t.x" :d="`M${t.x + 0.5} 1038V1056`" stroke="#909090" />
          <path v-for="p in percents" :key="p.y" :d="`M1867 ${p.y + 0.5}H1873`" stroke="#909090" />
          <path v-for="y in minorTicks" :key="y" :d="`M1867 ${y + 0.5}H1869`" stroke="#909090" />
          <path v-for="v in volumes" :key="v.y" :d="`M1867 ${v.y + 0.5}H1873M43 ${v.y + 0.5}H48`" stroke="#909090" />
          <path v-for="y in lowerTicks" :key="y" :d="`M1867 ${y + 0.5}H1869M46 ${y + 0.5}H48`" stroke="#909090" />
        </g>

        <text x="64" y="90" class="axis heading">소니드 매물대 수(13)</text>
        <g clip-path="url(#axes)" class="axis small">
          <text v-for="p in prices" :key="p[1]" x="46" :y="p[0] + 5" text-anchor="end">{{ p[1] }}</text>
          <text v-for="p in percents" :key="p.y" x="1874" :y="p.y + 4">{{ p.t }}</text>
          <text v-for="v in volumes" :key="'l' + v.y" x="42" :y="v.y + 4" text-anchor="end">{{ v.t }}</text>
          <text v-for="v in volumes" :key="'r' + v.y" x="1874" :y="v.y + 4">{{ v.t }}</text>
          <text v-for="t in times" :key="t.x" :x="t.x + 2" y="1051">{{ t.t }}</text>
          <text x="1874" y="1051">09:13:2</text>
          <text x="1867" y="89" class="red">LC:1,63</text>
          <text x="1867" y="101" class="blue">HC:-11,36</text>
        </g>

        <rect x="8.5" y="282.5" width="36" height="28" class="tag" />
        <rect x="1869.5" y="282.5" width="42" height="28" class="tag" />
        <rect x="10" y="741" width="34" height="13" fill="#e81b0c" />
        <rect x="1871" y="741" width="40" height="13" fill="#e81b0c" />
        <g class="small">
          <text x="26" y="294" text-anchor="middle" class="axis">616</text>
          <text x="1890" y="294" text-anchor="middle" class="axis">616</text>
          <text x="11" y="306" class="red" clip-path="url(#tagLeft)">13,44%</text>
          <text x="1871" y="306" class="red" clip-path="url(#tagRight)">-13,44%</text>
          <text x="40" y="752" text-anchor="end" fill="#fff">562</text>
          <text x="1875" y="752" fill="#fff">562</text>
          <text x="39" y="764" text-anchor="end" class="red">,50%</text>
          <text x="1875" y="764" class="red">3,50%</text>
        </g>
        <rect x="568.5" y="1038.5" width="135" height="17" class="tag" />
        <text x="571" y="1051" class="axis">2025/07/07(월) 09:03:05</text>
        <rect x="1903" y="898" width="8" height="7" fill="#404040" />
        <path d="M1905 900L1909 903M1909 900L1905 903" stroke="#fff" />
      </svg>
    </main>

    <footer class="bottom">
      <button class="step" aria-label="왼쪽으로"><svg viewBox="0 0 16 16"><path d="M10 3L5 8L10 13Z" class="solid" /></svg></button>
      <div class="track"><span class="lead"></span><button class="thumb" aria-label="스크롤"></button></div>
      <button v-for="i in playIcons" :key="i.name" class="step" :aria-label="i.name"><svg viewBox="0 0 16 16"><path :d="i.d" class="solid" /></svg></button>
      <label class="speed"><input type="range" min="0" max="10" value="1" aria-label="속도" /><i></i></label>
      <div class="tools">
        <button v-for="i in toolIcons" :key="i.name" :class="{ on: i.name === '십자선' }" :aria-label="i.name"><svg viewBox="0 0 16 16"><path :d="i.d" /></svg></button>
        <button aria-label="축소"><svg viewBox="0 0 16 16"><path d="M3 7H13V9H3Z" class="solid" /></svg></button>
        <button aria-label="확대"><svg viewBox="0 0 16 16"><path d="M3 7H7V3H9V7H13V9H9V13H7V9H3Z" class="solid" /></svg></button>
        <button class="auto">A</button>
      </div>
    </footer>
  </div>
</template>

<style>
body {
  background: #000;
}
</style>

<style scoped>
* {
  box-sizing: border-box;
}
.window {
  margin: 0 3px;
  background: #e8e8e8;
  border-top: 1px solid #000;
  border-bottom: 3px solid #000;
  font-family: "Noto Sans CJK KR", sans-serif;
  font-size: 13px;
  line-height: 16px;
  color: #000;
}
button,
input,
select {
  font: inherit;
  color: inherit;
  margin: 0;
  padding: 0;
  border: 0;
  border-radius: 0;
  background: none;
  appearance: none;
  min-width: 0;
  outline: 0;
}
b,
i {
  font-weight: 400;
  font-style: normal;
}
svg {
  display: block;
}
button svg {
  width: 16px;
  height: 16px;
}
button svg path,
button svg circle {
  fill: none;
  stroke: #808080;
  shape-rendering: crispEdges;
}
button svg .solid {
  fill: #404040;
  stroke: none;
}
button svg.dark path,
button svg .ink {
  stroke: #404040;
}
button svg .thick {
  stroke-width: 2;
  shape-rendering: auto;
}
button svg .gear {
  stroke: #606060;
  stroke-width: 3;
  shape-rendering: auto;
}
.title-bar {
  display: flex;
  align-items: center;
  height: 24px;
  margin: 0 -2px;
  background: #3a5592;
  color: #fff;
}
.badge {
  width: 15px;
  height: 16px;
  margin: 0 4px 0 3px;
  border: 1px solid #fff;
  border-radius: 3px;
  background: #5f78b0;
  font-weight: 700;
  line-height: 14px;
  text-align: center;
}
h1 {
  display: flex;
  gap: 7px;
  margin: 0;
  font-size: 13px;
  font-weight: 400;
  white-space: nowrap;
}
.caption {
  display: flex;
  align-items: center;
  gap: 2px;
  margin-left: auto;
  padding-right: 2px;
}
.caption .bar {
  width: 1px;
  height: 14px;
  margin: 0 2px;
  background: #6f85b5;
}
.caption svg path {
  stroke: #a9b6d6;
}
.toolbar {
  display: flex;
  align-items: center;
  height: 28px;
  padding: 3px 3px 1px;
  gap: 1px;
  background: #d0d0d0;
}
.toolbar > * {
  flex: none;
  height: 20px;
}
.tool {
  width: 20px;
  border: 1px solid #888;
  background: #f0f0f0;
  display: flex;
  align-items: center;
  justify-content: center;
}
.drop,
.stock {
  display: flex;
  align-items: center;
  border: 1px solid #888;
  background: #fff;
}
.drop select,
.drop input {
  flex: 1;
  padding-left: 3px;
  height: 18px;
}
.drop input,
.count,
.check {
  font-size: 12px;
}
.dim {
  color: #777;
}
.w32 {
  width: 32px;
}
.w68 {
  width: 68px;
}
.w38 {
  width: 38px;
}
.w38 select {
  padding-left: 8px;
}
.caret {
  width: 13px;
  height: 18px;
  border-left: 1px solid #aaa;
  background: #f4f4f4;
  display: flex;
  align-items: center;
  justify-content: center;
}
.caret::after {
  content: "";
  border: 4px solid transparent;
  border-top: 5px solid #555;
  border-bottom: 0;
}
.sound {
  width: 27px;
}
.sound svg {
  width: 14px;
}
.sound .caret {
  width: 11px;
}
.stock {
  width: 82px;
  gap: 3px;
  padding-left: 1px;
  color: #800040;
  background: linear-gradient(135deg, transparent 50%, #aaa 50%) right bottom / 8px 8px no-repeat #fff;
}
.stock b {
  width: 16px;
  height: 16px;
  background: #b060d8;
  color: #fff;
  text-align: center;
}
.stock input {
  width: 50px;
}
.group {
  display: flex;
  border: 1px solid #888;
  background: #f0f0f0;
}
.group button {
  flex: 1;
  display: flex;
  align-items: center;
  justify-content: center;
  white-space: nowrap;
}
.group button + button {
  border-left: 1px solid #999;
}
.group .on {
  background: #4a80c4;
  color: #fff;
}
.g0 {
  width: 80px;
}
.g1 {
  width: 57px;
}
.g2 {
  width: 153px;
  font-size: 10px;
}
.group .long {
  flex: none;
  width: 24px;
}
.count {
  display: flex;
  align-items: center;
  gap: 1px;
  width: 65px;
  color: #333;
}
.count input {
  width: 31px;
  height: 20px;
  padding-right: 2px;
  border: 1px solid #888;
  background: #fff;
  text-align: right;
  color: #000;
}
.icons {
  width: 78px;
}
.check {
  display: flex;
  align-items: center;
  gap: 3px;
}
.check input {
  width: 13px;
  height: 13px;
  border: 1px solid #888;
  background: #fff;
}
.quote {
  display: flex;
  gap: 2px;
  padding: 0 3px 1px;
  background: #d0d0d0;
  border-bottom: 1px solid #999;
}
.quote button {
  width: 40px;
  height: 20px;
  border: 1px solid #888;
}
.quote .buy {
  background: #f6d0cc;
}
.quote .sell {
  background: #c4dcf4;
}
.cells {
  display: flex;
  width: 751px;
  height: 20px;
  border: 1px solid #808080;
  background: #f0f0f0;
}
.cell {
  display: flex;
  align-items: center;
  white-space: nowrap;
}
.cell + .cell {
  border-left: 1px solid #b0b0b0;
}
.cell b {
  font-size: 12px;
  text-align: right;
}
.c1 {
  width: 172px;
}
.c1 b:first-child {
  width: 60px;
}
.down {
  margin-left: 3px;
  border: 5px solid transparent;
  border-top: 8px solid #1448c4;
  border-bottom: 0;
}
.diff {
  width: 49px;
}
.rate {
  width: 47px;
}
.c2 {
  width: 170px;
}
.vol {
  width: 70px;
}
.p1 {
  width: 57px;
}
.p2 {
  width: 41px;
}
.c3 {
  width: 83px;
  justify-content: flex-end;
  padding-right: 2px;
}
.c4 {
  width: 139px;
  padding-left: 1px;
}
.c4 b {
  width: 38px;
}
.c4 b + b {
  width: 50px;
}
.c5 {
  padding-left: 1px;
}
.c5 b {
  width: 34px;
  margin-right: 14px;
}
.blue {
  color: #1448c4;
  fill: #1448c4;
}
.red {
  color: #e81b0c;
  fill: #e81b0c;
}
.panel {
  padding: 1px 3px 0;
}
.chart {
  width: 100%;
  height: auto;
}
.chart text {
  font-size: 12px;
  white-space: pre;
}
.chart .heading {
  font-size: 13px;
}
.chart .small text {
  font-size: 11px;
}
.crisp {
  shape-rendering: crispEdges;
}
.grid {
  stroke: #d4d4d4;
  stroke-dasharray: 3 3;
}
.thin {
  fill: none;
  stroke-width: 1;
}
.axis {
  fill: #404040;
}
.tag {
  fill: #ffdf70;
  stroke: #000;
}
.chart .mark {
  font: 700 20px "DejaVu Sans", sans-serif;
  fill: #d8001c;
  text-anchor: middle;
}
.bottom {
  display: flex;
  align-items: center;
  height: 20px;
  padding: 0 3px 2px;
  background: #e8e8e8;
}
.step {
  flex: none;
  width: 17px;
  height: 17px;
  border: 1px solid #fff;
  border-right-color: #606060;
  border-bottom-color: #606060;
  background: #f0f0f0;
}
.step svg {
  width: 15px;
  height: 15px;
}
.step svg .solid {
  fill: #000;
}
.track {
  display: flex;
  flex: 1;
  height: 18px;
  background: repeating-conic-gradient(#f8f8f8 0 25%, #ececec 0 50%) 0 0 / 2px 2px;
}
.track .lead {
  flex: none;
  width: 56%;
}
.thumb {
  flex: none;
  width: 47px;
  height: 17px;
  margin-left: 8px;
  border: 1px solid #c0c0c0;
  border-right-color: #606060;
  border-bottom-color: #606060;
  background: #f0f0f0;
}
.speed {
  display: flex;
  flex-direction: column;
  width: 70px;
  margin: 0 6px;
}
.speed input {
  width: 70px;
  height: 11px;
  background: linear-gradient(#888, #888) 0 4px / 100% 2px no-repeat;
}
.speed input::-webkit-slider-thumb {
  appearance: none;
  width: 4px;
  height: 11px;
  border: 1px solid #888;
  background: #f4f4f4;
}
.speed i {
  height: 3px;
  margin-top: 1px;
  background: repeating-linear-gradient(90deg, #000 0 1px, transparent 1px 6px);
}
.tools {
  display: flex;
  gap: 1px;
}
.tools button {
  width: 16px;
  height: 17px;
}
.tools .on {
  background: #fff;
}
.tools .auto {
  font: 700 16px/17px "Liberation Sans", sans-serif;
  color: #505050;
}
</style>
